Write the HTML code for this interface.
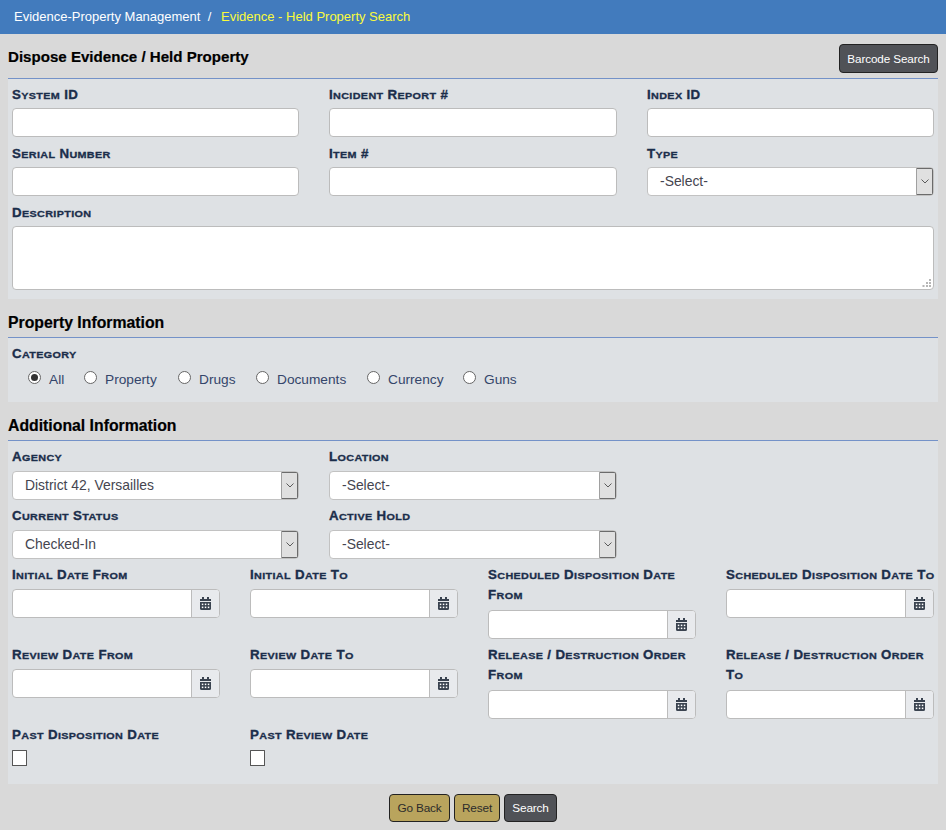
<!DOCTYPE html>
<html><head><meta charset="utf-8">
<style>
*{box-sizing:border-box;margin:0;padding:0}
html,body{width:946px;height:830px;overflow:hidden;background:#d9d9d9;font-family:"Liberation Sans",sans-serif;position:relative}
.a{position:absolute}
.top{left:0;top:0;width:946px;height:34px;background:#427bbd}
.bc{left:14px;top:7.5px;font-size:13px;line-height:18px;color:#fff;white-space:nowrap}
.bc .y{color:#fafa3c;margin-left:2.5px}
.h{font-weight:bold;font-size:15.5px;color:#000;-webkit-text-stroke:0.2px #000;white-space:nowrap;line-height:20px;left:8px}
.hl{left:8px;width:930px;height:1px;background:#7492c8}
.pn{left:8px;width:930px;background:#dee1e4}
.l{font-weight:bold;font-size:13.3px;color:#1b2e4b;white-space:nowrap;line-height:20.8px;letter-spacing:0.35px;-webkit-text-stroke:0.35px #1b2e4b;margin-top:0.5px}
.l i{display:inline-block;font-style:normal;font-size:10.8px;text-transform:uppercase;line-height:10px;transform:scaleY(0.86);transform-origin:0 100%}
.in{background:#fff;border:1px solid #bcbcbc;border-radius:4px;height:29px}
.sel{background:#fff;border:1px solid #c2c2c2;border-radius:4px;height:29px;font-size:13.9px;color:#45454f;line-height:27px;padding-left:12px;white-space:nowrap}
.dd{position:absolute;right:0;top:0;width:17px;height:27px;background:#e0e0e0;border:1px solid #6b6b6b;border-left-color:#a0a0a0;border-radius:0 2px 2px 0}
.dd svg{position:absolute;left:4px;top:10px}
.dg{background:#fff;border:1px solid #bcbcbc;border-radius:4px;height:29px;width:208px}
.dg .ad{position:absolute;right:0;top:0;width:28px;height:27px;background:#e8eaed;border-left:1px solid #bcbcbc;border-radius:0 3px 3px 0}
.dg .ad svg{position:absolute;left:8px;top:7px}
.rd{width:13px;height:13px;border:1px solid #666;border-radius:50%;background:#fff}
.rd.on::after{content:"";position:absolute;left:2px;top:2px;width:7px;height:7px;border-radius:50%;background:#333}
.rt{font-size:13.7px;color:#34456a;white-space:nowrap;line-height:18px}
.cb{width:15px;height:16px;border:1px solid #555;border-radius:0.5px;background:#fff}
.btn{height:28px;border:1px solid #222;border-radius:4px;font-size:11.8px;letter-spacing:-0.15px;line-height:27px;text-align:center;white-space:nowrap}
.gold{background:#b9a45d;color:#2b2b2b}
.dark{background:#505257;color:#fff}
</style></head><body>
<div class="a top"></div>
<div class="a bc">Evidence-Property Management &nbsp;/&nbsp; <span class="y">Evidence - Held Property Search</span></div>

<div class="a h" style="top:47px;font-size:15.1px">Dispose Evidence / Held Property</div>
<div class="a btn dark" style="left:839px;top:44px;width:99px;height:29px;line-height:27px;font-size:11.7px;letter-spacing:-0.1px">Barcode Search</div>
<div class="a hl" style="top:78px"></div>
<div class="a pn" style="top:79px;height:220px"></div>

<div class="a l" style="left:12px;top:84px">S<i>ystem</i> ID</div>
<div class="a l" style="left:329px;top:84px">I<i>ncident</i> R<i>eport</i> #</div>
<div class="a l" style="left:647px;top:84px">I<i>ndex</i> ID</div>
<div class="a in" style="left:12px;top:108px;width:287px"></div>
<div class="a in" style="left:329px;top:108px;width:288px"></div>
<div class="a in" style="left:647px;top:108px;width:287px"></div>

<div class="a l" style="left:12px;top:143px">S<i>erial</i> N<i>umber</i></div>
<div class="a l" style="left:329px;top:143px">I<i>tem</i> #</div>
<div class="a l" style="left:647px;top:143px">T<i>ype</i></div>
<div class="a in" style="left:12px;top:167px;width:287px"></div>
<div class="a in" style="left:329px;top:167px;width:288px"></div>
<div class="a sel" style="left:647px;top:167px;width:287px">-Select-<div class="dd"><svg width="8" height="5" viewBox="0 0 8 5"><path d="M0.5 0.5L4 4L7.5 0.5" fill="none" stroke="#5a5a5a" stroke-width="1"/></svg></div></div>

<div class="a l" style="left:12px;top:202px">D<i>escription</i></div>
<div class="a in" style="left:12px;top:226px;width:922px;height:64px"><svg class="a" style="left:909px;top:52px" width="10" height="9" viewBox="0 0 10 9"><g fill="#b6b6b6"><rect x="7" y="0" width="2" height="2"/><rect x="4" y="3" width="2" height="2"/><rect x="7" y="3" width="2" height="2"/><rect x="0.5" y="6" width="2" height="2"/><rect x="4" y="6" width="2" height="2"/><rect x="7" y="6" width="2" height="2"/></g></svg></div>

<div class="a h" style="top:313px;font-size:15.8px">Property Information</div>
<div class="a hl" style="top:337px"></div>
<div class="a pn" style="top:338px;height:64px"></div>
<div class="a l" style="left:12px;top:343px">C<i>ategory</i></div>
<div class="a rd on" style="left:28px;top:371px"></div><div class="a rt" style="left:49px;top:371px">All</div>
<div class="a rd" style="left:84px;top:371px"></div><div class="a rt" style="left:105px;top:371px">Property</div>
<div class="a rd" style="left:178px;top:371px"></div><div class="a rt" style="left:199px;top:371px">Drugs</div>
<div class="a rd" style="left:256px;top:371px"></div><div class="a rt" style="left:277px;top:371px">Documents</div>
<div class="a rd" style="left:367px;top:371px"></div><div class="a rt" style="left:388px;top:371px">Currency</div>
<div class="a rd" style="left:463px;top:371px"></div><div class="a rt" style="left:484px;top:371px">Guns</div>

<div class="a h" style="top:416px;font-size:15.8px">Additional Information</div>
<div class="a hl" style="top:440px"></div>
<div class="a pn" style="top:441px;height:343px"></div>

<div class="a l" style="left:12px;top:446px">A<i>gency</i></div>
<div class="a l" style="left:329px;top:446px">L<i>ocation</i></div>
<div class="a sel" style="left:12px;top:471px;width:287px">District 42, Versailles<div class="dd"><svg width="8" height="5" viewBox="0 0 8 5"><path d="M0.5 0.5L4 4L7.5 0.5" fill="none" stroke="#5a5a5a" stroke-width="1"/></svg></div></div>
<div class="a sel" style="left:329px;top:471px;width:288px">-Select-<div class="dd"><svg width="8" height="5" viewBox="0 0 8 5"><path d="M0.5 0.5L4 4L7.5 0.5" fill="none" stroke="#5a5a5a" stroke-width="1"/></svg></div></div>

<div class="a l" style="left:12px;top:505px">C<i>urrent</i> S<i>tatus</i></div>
<div class="a l" style="left:329px;top:505px">A<i>ctive</i> H<i>old</i></div>
<div class="a sel" style="left:12px;top:530px;width:287px">Checked-In<div class="dd"><svg width="8" height="5" viewBox="0 0 8 5"><path d="M0.5 0.5L4 4L7.5 0.5" fill="none" stroke="#5a5a5a" stroke-width="1"/></svg></div></div>
<div class="a sel" style="left:329px;top:530px;width:288px">-Select-<div class="dd"><svg width="8" height="5" viewBox="0 0 8 5"><path d="M0.5 0.5L4 4L7.5 0.5" fill="none" stroke="#5a5a5a" stroke-width="1"/></svg></div></div>

<div class="a l" style="left:12px;top:564px">I<i>nitial</i> D<i>ate</i> F<i>rom</i></div>
<div class="a l" style="left:250px;top:564px">I<i>nitial</i> D<i>ate</i> T<i>o</i></div>
<div class="a l" style="left:488px;top:564px">S<i>cheduled</i> D<i>isposition</i> D<i>ate</i><br>F<i>rom</i></div>
<div class="a l" style="left:726px;top:564px">S<i>cheduled</i> D<i>isposition</i> D<i>ate</i> T<i>o</i></div>
<div class="a dg" style="left:12px;top:589px"><div class="ad"><svg width="11" height="13" viewBox="0 0 11 13"><g fill="#3a4350"><rect x="2" y="0" width="2" height="2"/><rect x="7" y="0" width="2" height="2"/><rect x="0" y="2" width="11" height="2"/><path d="M0 5H11V11.5Q11 13 9.5 13H1.5Q0 13 0 11.5Z"/></g><g fill="#fff"><rect x="1.8" y="6.6" width="1.5" height="1.5"/><rect x="4.8" y="6.6" width="1.5" height="1.5"/><rect x="7.8" y="6.6" width="1.5" height="1.5"/><rect x="1.8" y="9.6" width="1.5" height="1.5"/><rect x="4.8" y="9.6" width="1.5" height="1.5"/><rect x="7.8" y="9.6" width="1.5" height="1.5"/></g></svg></div></div>
<div class="a dg" style="left:250px;top:589px"><div class="ad"><svg width="11" height="13" viewBox="0 0 11 13"><g fill="#3a4350"><rect x="2" y="0" width="2" height="2"/><rect x="7" y="0" width="2" height="2"/><rect x="0" y="2" width="11" height="2"/><path d="M0 5H11V11.5Q11 13 9.5 13H1.5Q0 13 0 11.5Z"/></g><g fill="#fff"><rect x="1.8" y="6.6" width="1.5" height="1.5"/><rect x="4.8" y="6.6" width="1.5" height="1.5"/><rect x="7.8" y="6.6" width="1.5" height="1.5"/><rect x="1.8" y="9.6" width="1.5" height="1.5"/><rect x="4.8" y="9.6" width="1.5" height="1.5"/><rect x="7.8" y="9.6" width="1.5" height="1.5"/></g></svg></div></div>
<div class="a dg" style="left:488px;top:610px"><div class="ad"><svg width="11" height="13" viewBox="0 0 11 13"><g fill="#3a4350"><rect x="2" y="0" width="2" height="2"/><rect x="7" y="0" width="2" height="2"/><rect x="0" y="2" width="11" height="2"/><path d="M0 5H11V11.5Q11 13 9.5 13H1.5Q0 13 0 11.5Z"/></g><g fill="#fff"><rect x="1.8" y="6.6" width="1.5" height="1.5"/><rect x="4.8" y="6.6" width="1.5" height="1.5"/><rect x="7.8" y="6.6" width="1.5" height="1.5"/><rect x="1.8" y="9.6" width="1.5" height="1.5"/><rect x="4.8" y="9.6" width="1.5" height="1.5"/><rect x="7.8" y="9.6" width="1.5" height="1.5"/></g></svg></div></div>
<div class="a dg" style="left:726px;top:589px"><div class="ad"><svg width="11" height="13" viewBox="0 0 11 13"><g fill="#3a4350"><rect x="2" y="0" width="2" height="2"/><rect x="7" y="0" width="2" height="2"/><rect x="0" y="2" width="11" height="2"/><path d="M0 5H11V11.5Q11 13 9.5 13H1.5Q0 13 0 11.5Z"/></g><g fill="#fff"><rect x="1.8" y="6.6" width="1.5" height="1.5"/><rect x="4.8" y="6.6" width="1.5" height="1.5"/><rect x="7.8" y="6.6" width="1.5" height="1.5"/><rect x="1.8" y="9.6" width="1.5" height="1.5"/><rect x="4.8" y="9.6" width="1.5" height="1.5"/><rect x="7.8" y="9.6" width="1.5" height="1.5"/></g></svg></div></div>
<div class="a l" style="left:12px;top:644px">R<i>eview</i> D<i>ate</i> F<i>rom</i></div>
<div class="a l" style="left:250px;top:644px">R<i>eview</i> D<i>ate</i> T<i>o</i></div>
<div class="a l" style="left:488px;top:644px">R<i>elease</i> / D<i>estruction</i> O<i>rder</i><br>F<i>rom</i></div>
<div class="a l" style="left:726px;top:644px">R<i>elease</i> / D<i>estruction</i> O<i>rder</i><br>T<i>o</i></div>
<div class="a dg" style="left:12px;top:669px"><div class="ad"><svg width="11" height="13" viewBox="0 0 11 13"><g fill="#3a4350"><rect x="2" y="0" width="2" height="2"/><rect x="7" y="0" width="2" height="2"/><rect x="0" y="2" width="11" height="2"/><path d="M0 5H11V11.5Q11 13 9.5 13H1.5Q0 13 0 11.5Z"/></g><g fill="#fff"><rect x="1.8" y="6.6" width="1.5" height="1.5"/><rect x="4.8" y="6.6" width="1.5" height="1.5"/><rect x="7.8" y="6.6" width="1.5" height="1.5"/><rect x="1.8" y="9.6" width="1.5" height="1.5"/><rect x="4.8" y="9.6" width="1.5" height="1.5"/><rect x="7.8" y="9.6" width="1.5" height="1.5"/></g></svg></div></div>
<div class="a dg" style="left:250px;top:669px"><div class="ad"><svg width="11" height="13" viewBox="0 0 11 13"><g fill="#3a4350"><rect x="2" y="0" width="2" height="2"/><rect x="7" y="0" width="2" height="2"/><rect x="0" y="2" width="11" height="2"/><path d="M0 5H11V11.5Q11 13 9.5 13H1.5Q0 13 0 11.5Z"/></g><g fill="#fff"><rect x="1.8" y="6.6" width="1.5" height="1.5"/><rect x="4.8" y="6.6" width="1.5" height="1.5"/><rect x="7.8" y="6.6" width="1.5" height="1.5"/><rect x="1.8" y="9.6" width="1.5" height="1.5"/><rect x="4.8" y="9.6" width="1.5" height="1.5"/><rect x="7.8" y="9.6" width="1.5" height="1.5"/></g></svg></div></div>
<div class="a dg" style="left:488px;top:690px"><div class="ad"><svg width="11" height="13" viewBox="0 0 11 13"><g fill="#3a4350"><rect x="2" y="0" width="2" height="2"/><rect x="7" y="0" width="2" height="2"/><rect x="0" y="2" width="11" height="2"/><path d="M0 5H11V11.5Q11 13 9.5 13H1.5Q0 13 0 11.5Z"/></g><g fill="#fff"><rect x="1.8" y="6.6" width="1.5" height="1.5"/><rect x="4.8" y="6.6" width="1.5" height="1.5"/><rect x="7.8" y="6.6" width="1.5" height="1.5"/><rect x="1.8" y="9.6" width="1.5" height="1.5"/><rect x="4.8" y="9.6" width="1.5" height="1.5"/><rect x="7.8" y="9.6" width="1.5" height="1.5"/></g></svg></div></div>
<div class="a dg" style="left:726px;top:690px"><div class="ad"><svg width="11" height="13" viewBox="0 0 11 13"><g fill="#3a4350"><rect x="2" y="0" width="2" height="2"/><rect x="7" y="0" width="2" height="2"/><rect x="0" y="2" width="11" height="2"/><path d="M0 5H11V11.5Q11 13 9.5 13H1.5Q0 13 0 11.5Z"/></g><g fill="#fff"><rect x="1.8" y="6.6" width="1.5" height="1.5"/><rect x="4.8" y="6.6" width="1.5" height="1.5"/><rect x="7.8" y="6.6" width="1.5" height="1.5"/><rect x="1.8" y="9.6" width="1.5" height="1.5"/><rect x="4.8" y="9.6" width="1.5" height="1.5"/><rect x="7.8" y="9.6" width="1.5" height="1.5"/></g></svg></div></div>
<div class="a l" style="left:12px;top:724px">P<i>ast</i> D<i>isposition</i> D<i>ate</i></div>
<div class="a l" style="left:250px;top:724px">P<i>ast</i> R<i>eview</i> D<i>ate</i></div>
<div class="a cb" style="left:12px;top:750px"></div>
<div class="a cb" style="left:250px;top:750px"></div>
<div class="a btn gold" style="left:389px;top:794px;width:61px">Go Back</div>
<div class="a btn gold" style="left:454px;top:794px;width:46px">Reset</div>
<div class="a btn dark" style="left:504px;top:794px;width:53px">Search</div>

</body></html>
